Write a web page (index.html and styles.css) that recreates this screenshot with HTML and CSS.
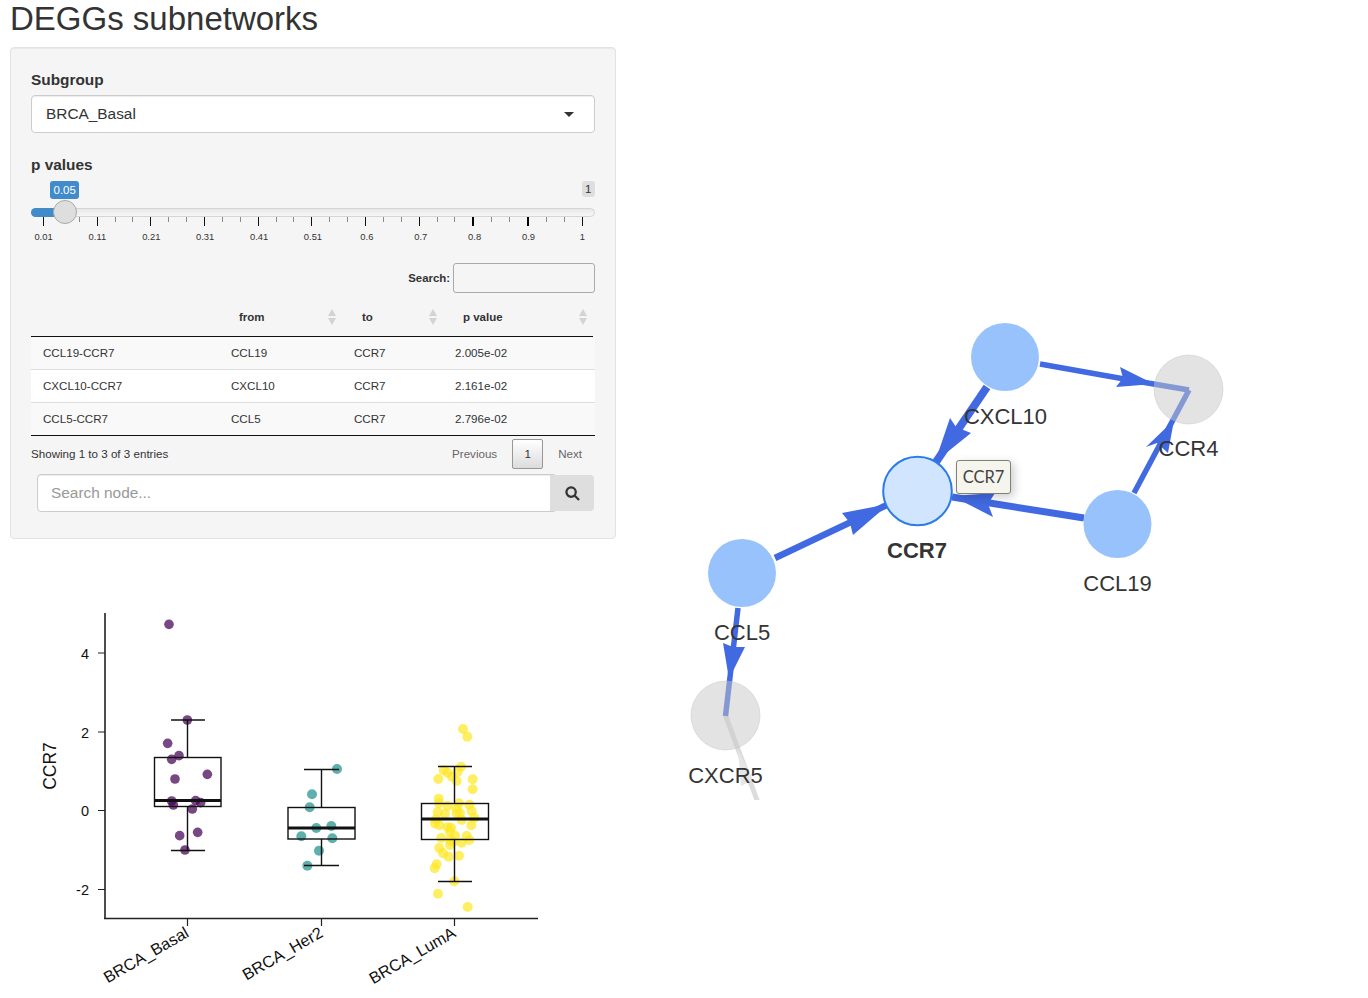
FILE: index.html
```html
<!DOCTYPE html>
<html lang="en">
<head>
<meta charset="utf-8">
<title>DEGGs subnetworks</title>
<link rel="stylesheet" href="styles.css">
</head>
<body>
<div class="page">
  <div class="left">
    <h1 class="title">DEGGs subnetworks</h1>
    <div class="panel">
      <div class="field-label">Subgroup</div>
      <div class="select"><span>BRCA_Basal</span><i class="caret"></i></div>
      <div class="field-label pvalues">p values</div>
      <div class="bubbles"><span class="bubble-from">0.05</span><span class="bubble-max">1</span></div>
      <div class="track"><div class="track-fill"></div><div class="handle"></div></div>
      <div class="ticks">
        <i class="major"></i><i></i><i></i><i class="major"></i><i></i><i></i><i class="major"></i><i></i><i></i><i class="major"></i><i></i><i></i><i class="major"></i><i></i><i></i><i class="major"></i><i></i><i></i><i class="major"></i><i></i><i></i><i class="major"></i><i></i><i></i><i class="major thick"></i><i></i><i></i><i class="major thick"></i><i></i><i></i><i class="major"></i>
      </div>
      <div class="tick-labels">
        <span>0.01</span><span>0.11</span><span>0.21</span><span>0.31</span><span>0.41</span><span>0.51</span><span>0.6</span><span>0.7</span><span>0.8</span><span>0.9</span><span>1</span>
      </div>
      <div class="dt-search"><span>Search:</span><div class="dt-input"></div></div>
      <table class="dt dt-head">
        <colgroup><col class="c1"><col class="c2"><col class="c3"><col></colgroup>
        <thead>
          <tr>
            <th></th>
            <th>from<svg class="sort" viewBox="0 0 8 16"><path d="M4 0l4 7H0zM4 16L0 9h8z"/></svg></th>
            <th>to<svg class="sort" viewBox="0 0 8 16"><path d="M4 0l4 7H0zM4 16L0 9h8z"/></svg></th>
            <th>p value<svg class="sort" viewBox="0 0 8 16"><path d="M4 0l4 7H0zM4 16L0 9h8z"/></svg></th>
          </tr>
        </thead>
      </table>
      <table class="dt dt-body">
        <colgroup><col class="c1"><col class="c2"><col class="c3"><col></colgroup>
        <tbody>
          <tr><td>CCL19-CCR7</td><td>CCL19</td><td>CCR7</td><td>2.005e-02</td></tr>
          <tr><td>CXCL10-CCR7</td><td>CXCL10</td><td>CCR7</td><td>2.161e-02</td></tr>
          <tr><td>CCL5-CCR7</td><td>CCL5</td><td>CCR7</td><td>2.796e-02</td></tr>
        </tbody>
      </table>
      <div class="dt-foot">
        <span class="info">Showing 1 to 3 of 3 entries</span>
        <div class="pager"><span>Previous</span><span class="page-btn">1</span><span>Next</span></div>
      </div>
      <div class="node-search">
        <div class="node-input">Search node...</div>
        <div class="node-btn">
          <svg class="search-icon" viewBox="0 0 16 16"><circle cx="6.5" cy="6.5" r="5"/><path d="M10.2 10.2L15 15"/></svg>
        </div>
      </div>
    </div>
    <svg class="plot" viewBox="10 560 606 438" width="606" height="438">
      <g class="pts purple" transform="translate(30 600) scale(.33333)">
        <circle cx="417" cy="73" r="14.5"/><circle cx="472" cy="360" r="14.5"/><circle cx="413" cy="430" r="14.5"/><circle cx="447" cy="467" r="14.5"/><circle cx="425" cy="478" r="14.5"/><circle cx="435" cy="537" r="14.5"/><circle cx="532" cy="523" r="14.5"/><circle cx="425" cy="603" r="14.5"/><circle cx="430" cy="615" r="14.5"/><circle cx="497" cy="602" r="14.5"/><circle cx="512" cy="608" r="14.5"/><circle cx="487" cy="627" r="14.5"/><circle cx="503" cy="697" r="14.5"/><circle cx="449" cy="707" r="14.5"/><circle cx="465" cy="750" r="14.5"/>
      </g>
      <g class="pts teal" transform="translate(280 710) scale(.33333)">
        <circle cx="171" cy="177" r="15"/><circle cx="96" cy="253" r="15"/><circle cx="89" cy="292" r="15"/><circle cx="109" cy="354" r="15"/><circle cx="154" cy="348" r="15"/><circle cx="64" cy="379" r="15"/><circle cx="157" cy="385" r="15"/><circle cx="117" cy="422" r="15"/><circle cx="82" cy="467" r="15"/>
      </g>
      <g class="pts yellow" transform="translate(280 710) scale(.33333)">
        <circle cx="549" cy="57" r="15"/><circle cx="562" cy="80" r="15"/><circle cx="543" cy="170" r="15"/><circle cx="491" cy="181" r="15"/><circle cx="503" cy="188" r="15"/><circle cx="533" cy="185" r="15"/><circle cx="516" cy="200" r="15"/><circle cx="530" cy="213" r="15"/><circle cx="475" cy="207" r="15"/><circle cx="578" cy="208" r="15"/><circle cx="578" cy="238" r="15"/><circle cx="476" cy="266" r="15"/><circle cx="477" cy="280" r="15"/><circle cx="503" cy="288" r="15"/><circle cx="537" cy="280" r="15"/><circle cx="568" cy="284" r="15"/><circle cx="530" cy="295" r="15"/><circle cx="540" cy="310" r="15"/><circle cx="575" cy="303" r="15"/><circle cx="473" cy="306" r="15"/><circle cx="495" cy="312" r="15"/><circle cx="530" cy="310" r="15"/><circle cx="583" cy="323" r="15"/><circle cx="468" cy="328" r="15"/><circle cx="465" cy="340" r="15"/><circle cx="478" cy="346" r="15"/><circle cx="545" cy="330" r="15"/><circle cx="574" cy="346" r="15"/><circle cx="503" cy="352" r="15"/><circle cx="513" cy="353" r="15"/><circle cx="510" cy="365" r="15"/><circle cx="525" cy="377" r="15"/><circle cx="484" cy="384" r="15"/><circle cx="560" cy="378" r="15"/><circle cx="568" cy="390" r="15"/><circle cx="510" cy="390" r="15"/><circle cx="520" cy="395" r="15"/><circle cx="545" cy="398" r="15"/><circle cx="510" cy="405" r="15"/><circle cx="478" cy="414" r="15"/><circle cx="489" cy="430" r="15"/><circle cx="506" cy="440" r="15"/><circle cx="537" cy="437" r="15"/><circle cx="470" cy="463" r="15"/><circle cx="464" cy="475" r="15"/><circle cx="523" cy="514" r="15"/><circle cx="474" cy="551" r="15"/><circle cx="563" cy="591" r="15"/>
      </g>
      <g class="box">
        <path d="M187.5 720V758M187.5 807V850.5M171 720H205M171 850.5H205"/>
        <rect x="154.5" y="757.5" width="66.5" height="49"/>
        <path class="median" d="M154.5 800.5H221"/>
        <path d="M321.5 769.5V807.5M321.5 839V865.5M304 769.5H339M304 865.5H339"/>
        <rect x="288" y="807.5" width="67" height="31.5"/>
        <path class="median" d="M288 828H355"/>
        <path d="M454.5 766.5V803.5M454.5 839.5V881.5M438 766.5H472M438 881.5H472"/>
        <rect x="421.5" y="803.5" width="67" height="36"/>
        <path class="median" d="M421.5 819H488.5"/>
      </g>
      <g class="axis">
        <path d="M105 613V919M104 918.5H538"/>
        <path class="tick" d="M98 653H105M98 732H105M98 810.5H105M98 889.5H105M187.5 919V926M321.5 919V926M454.5 919V926"/>
      </g>
      <g class="plot-text">
        <text class="ylab" x="89" y="659">4</text>
        <text class="ylab" x="89" y="738">2</text>
        <text class="ylab" x="89" y="816">0</text>
        <text class="ylab" x="89" y="895">-2</text>
        <text class="ytitle" transform="translate(56 766) rotate(-90)">CCR7</text>
        <text class="xlab" transform="translate(190 936) rotate(-30)">BRCA_Basal</text>
        <text class="xlab" transform="translate(324 936) rotate(-30)">BRCA_Her2</text>
        <text class="xlab" transform="translate(457 936) rotate(-30)">BRCA_LumA</text>
      </g>
    </svg>
  </div>
  <div class="right">
    <svg class="net" viewBox="616 0 752 998" width="752" height="998">
      <defs><clipPath id="canvas"><rect x="616" y="60" width="752" height="740"/></clipPath></defs>
      <g clip-path="url(#canvas)">
        <path class="edge-grey" d="M725.5 715.5L760 808"/>
        <polygon class="head-grey" points="738,750 741,786 753,780"/>
      </g>
      <path class="edge w8" d="M987 387L936 462"/>
      <polygon class="head" points="935,462 950,418 956,427 971,433"/>
      <path class="edge w7" d="M1084 518L952 497"/>
      <polygon class="head" points="952,496 995,493 988,504 993,517"/>
      <path class="edge w6" d="M775 558L889 504"/>
      <polygon class="head" points="889,504 842,513 850,523 853,535"/>
      <path class="edge w5" d="M1040 364L1130 380L1189 390"/>
      <polygon class="head" points="1154,384 1120,367 1123,378 1116,387"/>
      <path class="edge w5" d="M1134 493L1189 390"/>
      <polygon class="head" points="1174,420 1146,447 1157,443 1168,453"/>
      <path class="edge w5" d="M738 608L725.5 716"/>
      <polygon class="head" points="729,679 723,643 733,647 745,647"/>
      <circle class="node" cx="1005" cy="357" r="34"/>
      <circle class="node" cx="1117.5" cy="524" r="34"/>
      <circle class="node" cx="742" cy="573" r="34"/>
      <circle class="node-grey" cx="1188.5" cy="389.5" r="34.5"/>
      <circle class="node-grey" cx="725.5" cy="715.5" r="34.5"/>
      <circle class="node-sel" cx="917.5" cy="491" r="34.3"/>
      <text class="nlabel" x="1005.5" y="424">CXCL10</text>
      <text class="nlabel" x="1188.5" y="456">CCR4</text>
      <text class="nlabel bold" x="917" y="558">CCR7</text>
      <text class="nlabel" x="1117.5" y="591">CCL19</text>
      <text class="nlabel" x="742" y="640">CCL5</text>
      <text class="nlabel" x="725.5" y="783">CXCR5</text>
    </svg>
    <div class="net-tip">CCR7</div>
  </div>
</div>
</body>
</html>
```
FILE: styles.css
```css
* { box-sizing: border-box; }
html, body { margin: 0; padding: 0; background: #fff; overflow: hidden; }
body { font-family: "Liberation Sans", Arial, sans-serif; color: #333; font-size: 15.4px; }
.page { display: grid; grid-template-columns: 616px 752px; height: 998px; }
.left { padding-left: 10px; }
.right { position: relative; }
.title { margin: 0; height: 47px; font-size: 33px; line-height: 38px; font-weight: 400; color: #333; white-space: nowrap; }
.panel { width: 606px; height: 492px; padding: 23px 20px 0; background: #f5f5f5; border: 1px solid #e3e3e3; border-radius: 4px; box-shadow: inset 0 1px 1px rgba(0,0,0,.05); }
.field-label { font-weight: 700; font-size: 15.4px; line-height: 18px; height: 18px; }
.select { display: flex; align-items: center; justify-content: space-between; height: 38px; margin-top: 6px; padding: 0 20px 0 14px; background: #fff; border: 1px solid #ccc; border-radius: 4px; box-shadow: inset 0 1px 1px rgba(0,0,0,.075); }
.caret { display: block; width: 0; height: 0; border-left: 5.5px solid transparent; border-right: 5.5px solid transparent; border-top: 5.5px solid #333; }
.pvalues { margin-top: 23px; }
.bubbles { display: flex; justify-content: space-between; align-items: flex-start; height: 17px; margin-top: 7px; padding-left: 19px; font-size: 11.5px; line-height: 16px; }
.bubble-from { height: 18px; padding: 0 3.5px; background: #428bca; color: #fff; border-radius: 3px; line-height: 18px; }
.bubble-max { height: 16px; padding: 0 3.5px; background: #dedede; color: #333; border-radius: 3px; }
.track { position: relative; height: 9px; margin-top: 10px; background: linear-gradient(#e8e8e8, #f7f7f7); border: 1px solid #d5d5d5; border-radius: 5px; }
.track-fill { width: 28px; height: 9px; margin: -1px 0 0 -1px; background: #428bca; border-radius: 5px 0 0 5px; }
.handle { position: absolute; left: 21px; top: -9px; width: 24px; height: 24px; background: #dedede; border: 1px solid #aaa; border-radius: 50%; }
.ticks { display: flex; justify-content: space-between; align-items: flex-start; height: 9px; margin: 0 12px 0 12px; }
.ticks i { display: block; width: 1px; height: 5px; background: #8a8a8a; }
.ticks i.major { height: 9px; background: #111; }
.ticks i.thick { width: 2px; background: #000; }
.tick-labels { display: flex; justify-content: space-between; height: 12px; margin: 5px 12px 0; font-size: 9.4px; line-height: 12px; }
.tick-labels span { display: flex; justify-content: center; width: 1px; white-space: nowrap; }
.dt-search { display: flex; justify-content: flex-end; align-items: center; gap: 3px; height: 30px; margin-top: 20px; font-size: 11.4px; font-weight: 700; }
.dt-input { width: 142px; height: 30px; border: 1px solid #aaa; border-radius: 3px; }
.dt { border-collapse: collapse; table-layout: fixed; }
.dt .c1 { width: 188px; }
.dt .c2 { width: 123px; }
.dt .c3 { width: 101px; }
.dt-head { width: 562px; }
.dt-head th { position: relative; height: 43px; padding: 5px 0 0 20px; text-align: left; font-size: 11.5px; font-weight: 700; border-bottom: 1px solid #111; }
.sort { position: absolute; right: 6px; top: 16px; width: 8px; height: 16px; fill: #d3d3d3; }
.dt-body { width: 564px; }
.dt-body td { height: 33px; padding: 0 0 1px 12px; font-size: 11.6px; color: #333; border-bottom: 1px solid #ddd; }
.dt-body tr:nth-child(odd) { background: #f9f9f9; }
.dt-body tr:nth-child(even) { background: #fff; }
.dt-body tr:last-child td { border-bottom: 1px solid #111; }
.dt-foot { display: flex; justify-content: space-between; align-items: center; height: 34px; font-size: 11.6px; }
.pager { display: flex; align-items: center; gap: 15px; padding-right: 13px; color: #666; }
.page-btn { display: flex; align-items: center; justify-content: center; width: 31px; height: 30px; margin-top: 1px; color: #333; border: 1px solid #979797; border-radius: 2px; background: linear-gradient(#fff, #dcdcdc); }
.node-search { display: flex; height: 38px; margin: 4px 1px 0 6px; }
.node-input { width: 520px; height: 38px; padding: 0 13px; line-height: 35px; color: #999; background: #fff; border: 1px solid #ccc; border-radius: 4px; box-shadow: inset 0 1px 1px rgba(0,0,0,.075); }
.node-btn { display: flex; align-items: center; justify-content: center; width: 44px; height: 36px; margin: 1px 0 0 -7px; background: #dedede; border-radius: 0 4px 4px 0; z-index: 1; }
.search-icon { width: 15px; height: 15px; fill: none; stroke: #333; stroke-width: 2.4; }
.plot { display: block; margin-top: 21px; margin-left: 0; }
.pts circle { opacity: .72; }
.purple { fill: #440154; }
.teal { fill: #21908c; }
.yellow { fill: #fde725; }
.box { fill: none; stroke: #111; stroke-width: 1.4; }
.box .median { stroke-width: 2.8; }
.axis { fill: none; stroke: #222; stroke-width: 1.6; }
.axis .tick { stroke-width: 1.2; }
.plot-text { font-family: "Liberation Sans", Arial, sans-serif; fill: #111; }
.ylab { font-size: 14.5px; text-anchor: end; }
.ytitle { font-size: 17.5px; text-anchor: middle; }
.xlab { font-size: 16.3px; text-anchor: end; }
.net { display: block; }
.edge { fill: none; stroke: #4169e1; }
.w8 { stroke-width: 8; }
.w7 { stroke-width: 7; }
.w6 { stroke-width: 6.5; }
.w5 { stroke-width: 5.5; }
.head { fill: #4169e1; }
.edge-grey { fill: none; stroke: #dcdcdc; stroke-width: 5; }
.head-grey { fill: #e6e6e6; }
.node { fill: #97c2fc; }
.node-grey { fill: rgba(200,200,200,.5); stroke: rgba(190,190,190,.4); stroke-width: 1; }
.node-sel { fill: #d2e5ff; stroke: #2b7ce9; stroke-width: 2; }
.nlabel { font-family: "Liberation Sans", Arial, sans-serif; font-size: 22px; fill: #343434; text-anchor: middle; }
.nlabel.bold { font-weight: 700; }
.net-tip { position: absolute; left: 340px; top: 460px; width: 55px; height: 34px; font-family: Lato, sans-serif; font-size: 16.5px; line-height: 32px; text-align: center; color: #444; background: #f5f4ed; border: 1px solid #808074; border-radius: 3px; box-shadow: 3px 3px 10px rgba(0,0,0,.2); }
```
